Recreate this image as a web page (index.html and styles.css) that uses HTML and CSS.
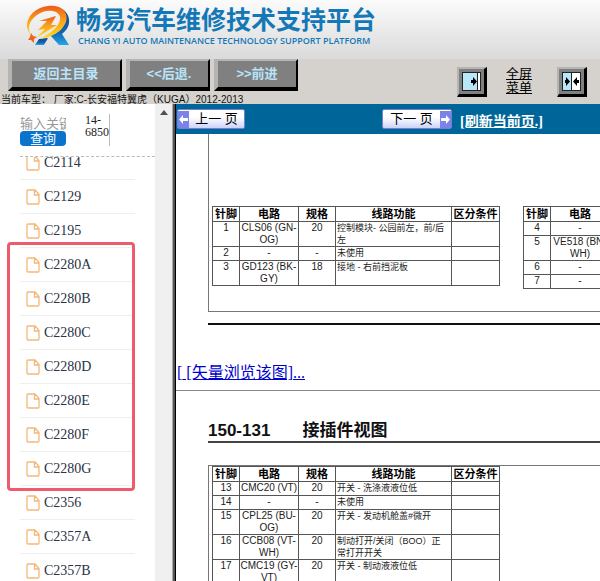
FILE: index.html
```html
<!DOCTYPE html>
<html lang="zh-CN">
<head>
<meta charset="utf-8">
<title>畅易汽车维修技术支持平台</title>
<link rel="stylesheet" href="styles.css">
</head>
<body>
<header class="banner">
  <svg class="logo" viewBox="0 0 46 42" aria-hidden="true">
    <defs>
      <linearGradient id="warm" x1="0" y1="0" x2="0" y2="1"><stop offset="0" stop-color="#ee5a1c"/><stop offset=".45" stop-color="#fba31a"/><stop offset="1" stop-color="#ffdc1a"/></linearGradient>
      <linearGradient id="cool" x1="0" y1="0" x2="0" y2="1"><stop offset="0" stop-color="#123f8c"/><stop offset=".65" stop-color="#1265b5"/><stop offset="1" stop-color="#23a8e4"/></linearGradient>
    </defs>
    <path d="M37 4C46 9 47 22 37 29L44 40H34L25 30C38 27 44 16 37 4Z" fill="url(#cool)"/>
    <path d="M14 34L23 33L19 40H10Z" fill="url(#cool)"/>
    <path fill-rule="evenodd" d="M6 30C-4 19 6 3 23 1C38-1 45 9 40 19C36 27 27 32 15 34C28 27 36 19 35 12C33 4 20 4 12 10C4 16 2 23 6 30Z" fill="url(#warm)"/>
    <path d="M14 16L31 11L26 20L32 20L11 33L20 24L13 25L22 16Z" fill="url(#warm)"/>
    <path d="M6 28L8 31L12 32L9 34L9 38L6 35L3 35L5 32Z" fill="#ee6420"/>
  </svg>
  <div class="brand">
    <h1>畅易汽车维修技术支持平台</h1>
    <p>CHANG YI AUTO MAINTENANCE TECHNOLOGY SUPPORT PLATFORM</p>
  </div>
</header>

<div class="toolbar">
  <div class="tools">
    <div class="nav">
      <button class="bevel wide">返回主目录</button>
      <button class="bevel">&lt;&lt;后退.</button>
      <button class="bevel">&gt;&gt;前进</button>
    </div>
    <div class="view">
      <button class="bevel square" aria-label="显示菜单">
        <svg viewBox="0 0 19 19"><path d="M0 0H19V19H0Z" fill="#222"/><path d="M1 1H15V18H1Z" fill="#b9e7f7"/><path d="M16 1H18V18H16Z" fill="#fff"/><path d="M9 8H11V5L15 9.500L11 14V11H9Z" fill="#000"/></svg>
      </button>
      <a class="screen" href="#">全屏<br>菜单</a>
      <button class="bevel square" aria-label="隐藏菜单">
        <svg viewBox="0 0 19 19"><path d="M0 0H19V19H0Z" fill="#222"/><path d="M1 1H9V18H1Z" fill="#b9e7f7"/><path d="M10 1H18V18H10Z" fill="#fff"/><path d="M3 8H4V5L8 9.500L4 14V11H3ZM17 8H15V5L11 9.500L15 14V11H17Z" fill="#000"/></svg>
      </button>
    </div>
  </div>
  <p class="model">当前车型： 厂家:C-长安福特翼虎（KUGA）2012-2013</p>
</div>

<div class="frames">
  <aside class="side">
    <form class="search">
      <div class="query">
        <input type="text" placeholder="输入关键字" aria-label="输入关键字">
        <button type="button">查询</button>
      </div>
      <div class="count">14-<br>6850</div>
    </form>
    <nav class="listing">
      <svg width="0" height="0" class="defs"><symbol id="file" viewBox="0 0 14 16"><path d="M2 1H9L13 5.500V14Q13 15 12 15H2Q1 15 1 14V2Q1 1 2 1ZM8.500 1V6H13" fill="none" stroke="#f3b878" stroke-width="1.300"/></symbol></svg>
      <ul>
        <li><a href="#"><svg><use href="#file"/></svg>C2114</a></li>
        <li><a href="#"><svg><use href="#file"/></svg>C2129</a></li>
        <li><a href="#"><svg><use href="#file"/></svg>C2195</a></li>
      </ul>
      <ul class="marked">
        <li><a href="#"><svg><use href="#file"/></svg>C2280A</a></li>
        <li><a href="#"><svg><use href="#file"/></svg>C2280B</a></li>
        <li><a href="#"><svg><use href="#file"/></svg>C2280C</a></li>
        <li><a href="#"><svg><use href="#file"/></svg>C2280D</a></li>
        <li><a href="#"><svg><use href="#file"/></svg>C2280E</a></li>
        <li><a href="#"><svg><use href="#file"/></svg>C2280F</a></li>
        <li><a href="#"><svg><use href="#file"/></svg>C2280G</a></li>
      </ul>
      <ul>
        <li><a href="#"><svg><use href="#file"/></svg>C2356</a></li>
        <li><a href="#"><svg><use href="#file"/></svg>C2357A</a></li>
        <li><a href="#"><svg><use href="#file"/></svg>C2357B</a></li>
      </ul>
    </nav>
  </aside>
  <div class="scroll"><svg viewBox="0 0 8 5"><path d="M0 5L4 0L8 5Z" fill="#505050"/></svg></div>
  <div class="divider"></div>

  <main class="content">
    <div class="pager">
      <button class="page prev"><svg viewBox="0 0 11 17"><path d="M0 0H11V17H0Z" fill="#7b84e6"/><path d="M1 8.500L5 4V7H10V10H5V13Z" fill="#fff"/></svg><span>上一 页</span></button>
      <button class="page next"><span>下一 页</span><svg viewBox="0 0 11 17"><path d="M0 0H11V17H0Z" fill="#7b84e6"/><path d="M10 8.500L6 4V7H1V10H6V13Z" fill="#fff"/></svg></button>
      <a class="reload" href="#">[刷新当前页.]</a>
    </div>

    <section class="sheet first">
      <div class="frame">
        <table>
          <colgroup><col class="pin"><col class="circuit"><col class="gauge"><col class="role"><col class="cond"></colgroup>
          <thead><tr><th>针脚</th><th>电路</th><th>规格</th><th>线路功能</th><th>区分条件</th></tr></thead>
          <tbody>
            <tr><td>1</td><td>CLS06 (GN-<br>OG)</td><td>20</td><td>控制模块- 公园前左，前/后<br>左</td><td></td></tr>
            <tr><td>2</td><td>-</td><td>-</td><td>未使用</td><td></td></tr>
            <tr><td>3</td><td>GD123 (BK-<br>GY)</td><td>18</td><td>接地 - 右前挡泥板</td><td></td></tr>
          </tbody>
        </table>
        <table>
          <colgroup><col class="pin"><col class="circuit"><col class="gauge"><col class="role"><col class="cond"></colgroup>
          <thead><tr><th>针脚</th><th>电路</th><th></th><th></th><th></th></tr></thead>
          <tbody>
            <tr><td>4</td><td>-</td><td></td><td></td><td></td></tr>
            <tr><td>5</td><td>VE518 (BN-<br>WH)</td><td></td><td></td><td></td></tr>
            <tr><td>6</td><td>-</td><td></td><td></td><td></td></tr>
            <tr><td>7</td><td>-</td><td></td><td></td><td></td></tr>
          </tbody>
        </table>
      </div>
    </section>

    <p class="vector"><a href="#">[</a><a href="#"> [矢量浏览该图]...</a></p>

    <section class="sheet second">
      <h2><span>150-131</span><span>接插件视图</span></h2>
      <div class="frame">
        <table>
          <colgroup><col class="pin"><col class="circuit"><col class="gauge"><col class="role"><col class="cond"></colgroup>
          <thead><tr><th>针脚</th><th>电路</th><th>规格</th><th>线路功能</th><th>区分条件</th></tr></thead>
          <tbody>
            <tr><td>13</td><td>CMC20 (VT)</td><td>20</td><td>开关 - 洗涤液液位低</td><td></td></tr>
            <tr><td>14</td><td>-</td><td>-</td><td>未使用</td><td></td></tr>
            <tr><td>15</td><td>CPL25 (BU-<br>OG)</td><td>20</td><td>开关 - 发动机舱盖#微开</td><td></td></tr>
            <tr><td>16</td><td>CCB08 (VT-<br>WH)</td><td>20</td><td>制动打开/关闭（BOO）正<br>常打开开关</td><td></td></tr>
            <tr><td>17</td><td>CMC19 (GY-<br>VT)</td><td>20</td><td>开关 - 制动液液位低</td><td></td></tr>
          </tbody>
        </table>
      </div>
    </section>
  </main>
</div>
</body>
</html>
```

FILE: styles.css
```css
* { box-sizing: border-box; }

body {
  margin: 0;
  height: 100vh;
  display: flex;
  flex-direction: column;
  overflow: hidden;
  background: #fff;
  font-family: "Liberation Sans", "Noto Sans CJK SC", sans-serif;
}

h1, h2, p, ul { margin: 0; padding: 0; font-weight: normal; }
button { font-family: inherit; cursor: pointer; }

/* Banner */
.banner {
  flex: none;
  height: 59px;
  display: flex;
  gap: 5px;
  padding: 5px 0 0 25px;
  background: linear-gradient(#fbfbfb, #dadada);
  color: #1478b6;
}
.logo { width: 46px; height: 42px; }
.brand { white-space: nowrap; }
.brand h1 { font-size: 25px; line-height: 30px; font-weight: bold; }
.brand p { padding-left: 2px; font: 600 9px/12px "Open Sans", sans-serif; }

/* Toolbar */
.toolbar { flex: none; height: 45px; overflow: hidden; background: #d5d2cd; }
.tools { display: flex; justify-content: space-between; height: 34px; padding: 0 13px 0 8px; }
.nav { display: flex; gap: 4px; }
.bevel {
  width: 84px;
  height: 32px;
  padding: 0;
  border: 4px solid;
  border-width: 2px 2px 4px 4px;
  border-color: #b4b4b4 #000 #000 #b4b4b4;
  background: #808080;
  color: #b8e4fa;
  font-size: 13px;
  line-height: 16px;
  font-weight: bold;
}
.bevel.wide { width: 114px; }
.view { display: flex; gap: 19px; padding-top: 8px; }
.bevel.square { width: 30px; height: 30px; border-width: 2px 3px 3px 2px; display: grid; place-items: center; }
.square svg { width: 19px; height: 19px; }
.screen { width: 32px; color: #000; font-size: 13px; line-height: 14px; }
.model { padding-left: 1px; font-size: 10px; line-height: 13px; white-space: nowrap; color: #111; }

/* Frames */
.frames { flex: 1; min-height: 0; display: flex; }
.side { flex: none; width: 155px; display: flex; flex-direction: column; overflow: hidden; }
.search {
  flex: none;
  height: 53px;
  margin-left: 20px;
  padding-top: 10px;
  display: flex;
  gap: 19px;
  border-bottom: 1px dashed #bbb;
}
.query { width: 46px; }
.query input {
  display: block;
  width: 100%;
  height: 17px;
  padding: 2px 0 0;
  border: 0;
  outline: 0;
  background: none;
  font: 13px "Liberation Sans", "Noto Sans CJK SC", sans-serif;
}
.query input::placeholder { color: #999; }
.query button {
  display: block;
  width: 100%;
  height: 15px;
  padding: 0;
  border: 0;
  border-radius: 4px;
  background: #0a74cc;
  color: #fff;
  font-size: 13px;
  line-height: 15px;
}
.count {
  width: 25px;
  height: 32px;
  border-right: 1px solid #bbb;
  font: 12px/12px "Liberation Serif", serif;
  color: #222;
}
.listing { flex: 1; min-height: 0; overflow: hidden; padding: 0 20px; }
.listing ul { list-style: none; position: relative; }
.listing ul:nth-of-type(1) { margin-top: -11px; }
.defs { display: block; }
.listing li { height: 34px; border-bottom: 1px solid #efefef; }
.listing a {
  display: flex;
  align-items: center;
  gap: 4px;
  height: 33px;
  padding-left: 6px;
  font: 14px "Liberation Serif", serif;
  color: #2b3345;
  text-decoration: none;
}
.listing a svg { width: 14px; height: 16px; }
.marked::after {
  content: "";
  position: absolute;
  inset: -6px 0 -5px -13px;
  border: 3px solid #ee5b6c;
  border-radius: 4px;
  pointer-events: none;
}
.scroll { flex: none; width: 17px; padding-top: 6px; background: #f0f0f0; }
.scroll svg { display: block; width: 8px; height: 5px; margin: 0 auto; }
.divider { flex: none; width: 4px; background: #555; border-left: 1px solid #aaa; border-right: 1px solid #000; }

/* Document pane */
.content { flex: 1; min-width: 0; overflow: hidden; }
.pager { display: flex; align-items: center; height: 30px; padding-left: 1px; background: #069; }
.page {
  display: flex;
  flex: none;
  align-items: center;
  width: 68px;
  height: 20px;
  padding: 0;
  border: 1px solid #7780c8;
  border-radius: 2px;
  background: linear-gradient(#fff, #fff 40%, #ccd2fa);
  color: #000;
  font-size: 13px;
  line-height: 16px;
}
.page span { flex: 1; white-space: nowrap; }
.page svg { width: 11px; height: 17px; }
.next { margin-left: 137px; width: 70px; }
.reload { margin-left: 8px; padding-top: 6px; color: #fff; font: bold 14px/16px "Liberation Serif", "Noto Sans CJK SC", serif; white-space: nowrap; }

.sheet { padding-left: 32px; }
.frame { display: flex; align-items: flex-start; gap: 23px; padding-left: 3px; border-left: 1px solid #777; }
.first .frame { height: 178px; padding-top: 72px; border-bottom: 1px solid #777; }
.first::after { content: ""; display: block; height: 11px; border-bottom: 2px solid #111; }
.vector { padding: 38px 0 7px 1px; border-bottom: 1px solid #888; font: 16px/20px "Liberation Serif", "Noto Sans CJK SC", serif; white-space: pre; }
.vector a { color: #00c; }
.second h2 {
  display: flex;
  gap: 32px;
  height: 52px;
  padding-top: 30px;
  border-bottom: 2px solid #444;
  font-size: 17px;
  line-height: 20px;
  font-weight: bold;
  color: #111;
}
.second .frame { margin-top: 22px; border-top: 1px solid #777; }

table {
  flex: none;
  width: 287px;
  table-layout: fixed;
  border-collapse: collapse;
  font-size: 10px;
  line-height: 12px;
  color: #222;
}
.pin { width: 27px; }
.circuit { width: 59px; }
.gauge { width: 37px; }
.role { width: 116px; }
.cond { width: 48px; }
th, td { padding: 0; border: 1px solid #555; text-align: center; vertical-align: top; white-space: nowrap; height: 14px; }
th { height: 15px; font-size: 11px; line-height: 14px; color: #000; }
td:nth-child(4) { padding-left: 1px; text-align: left; font-size: 9px; }
```
